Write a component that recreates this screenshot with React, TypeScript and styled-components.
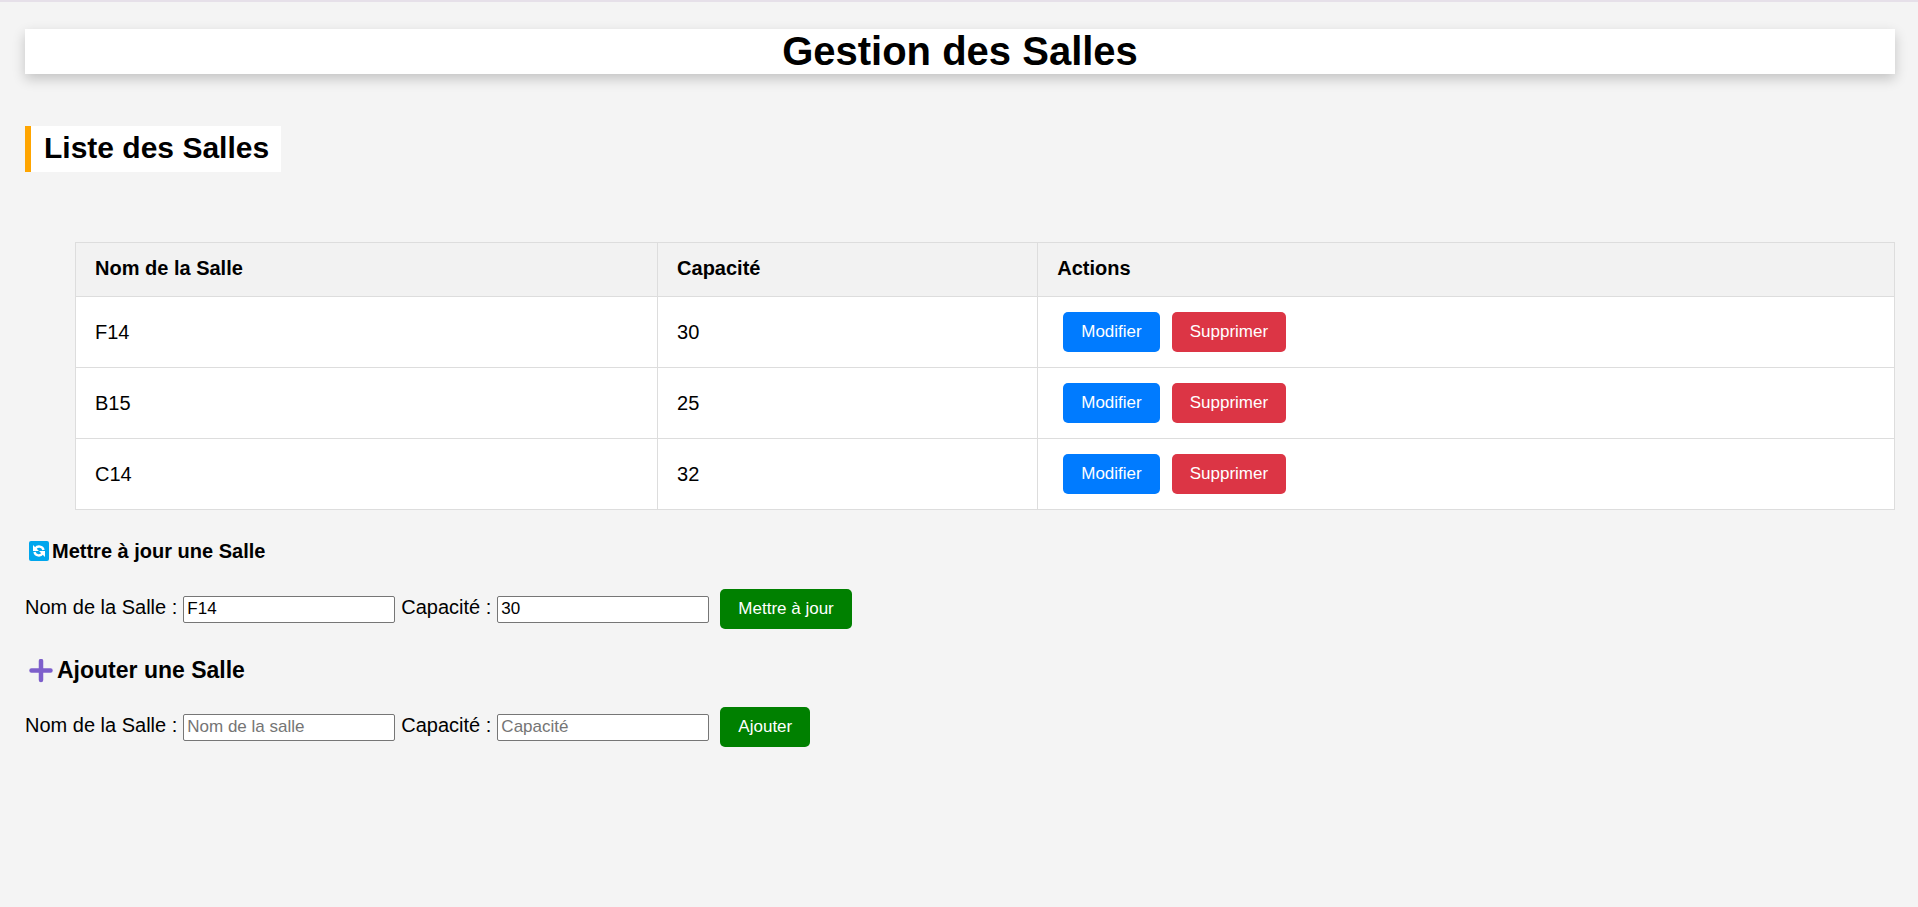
import React, { useState } from "react";
import styled, { createGlobalStyle } from "styled-components";

const GlobalStyle = createGlobalStyle`
  body {
    margin: 0;
    background: #f4f4f4;
    color: #000;
    font-family: Arial, "Liberation Sans", sans-serif;
    font-size: 20px;
    line-height: 23px;
  }
`;

const Page = styled.main`
  border-top: 2px solid #e6e0e9;
  padding: 27px 23px 25px 25px;
`;

const PageTitle = styled.h1`
  margin: 0 0 52px;
  background: #fff;
  box-shadow: 0 5px 12px rgba(0, 0, 0, 0.2);
  font-size: 40px;
  line-height: 45px;
  text-align: center;
`;

const ListTitle = styled.h2`
  width: fit-content;
  margin: 0 0 70px;
  padding: 5px 12px 7px 13px;
  border-left: 6px solid orange;
  background: #fff;
  font-size: 30px;
  line-height: 34px;
`;

const TableArea = styled.div`
  padding-left: 50px;
`;

const RoomTable = styled.table`
  width: 100%;
  border-collapse: collapse;
  background: #fff;
`;

const HeadCell = styled.th<{ $width?: string }>`
  width: ${(p) => p.$width ?? "auto"};
  padding: 14px 19px 16px;
  border: 1px solid #ddd;
  background: #f2f2f2;
  text-align: left;
`;

const Cell = styled.td`
  padding: 15px 19px;
  border: 1px solid #ddd;
`;

const ActionGroup = styled.div`
  display: flex;
  gap: 12px;
  padding-left: 6px;
`;

const tones = { edit: "#007bff", remove: "#dc3545", submit: "green" };

const Button = styled.button<{ $tone: keyof typeof tones }>`
  height: 40px;
  padding: 0 18px;
  border: 0;
  border-radius: 5px;
  background: ${(p) => tones[p.$tone]};
  color: #fff;
  font-family: inherit;
  font-size: 17px;
  cursor: pointer;
`;

const SectionTitle = styled.h3<{ $large?: boolean }>`
  display: flex;
  align-items: center;
  gap: 3px;
  margin: ${(p) => (p.$large ? "28px 0 23px" : "29px 0 26px")};
  padding-left: 4px;
  font-size: ${(p) => (p.$large ? 23 : 20)}px;
  line-height: ${(p) => (p.$large ? 27 : 24)}px;
`;

const RoomForm = styled.form`
  display: flex;
  align-items: baseline;
  gap: 11px;
`;

const Fields = styled.div`
  display: flex;
  align-items: baseline;
  gap: 6px;
`;

const TextInput = styled.input`
  box-sizing: border-box;
  width: 212px;
  height: 27px;
  padding: 1px 3px;
  border: 1px solid #767676;
  border-radius: 2px;
  background: #fff;
  color: #000;
  font-family: inherit;
  font-size: 17px;

  &::placeholder {
    color: #757575;
  }
`;

const RefreshIcon = () => (
  <svg width="20" height="20" viewBox="0 0 20 20" aria-hidden="true">
    <rect width="20" height="20" rx="2" fill="#00a6ed" />
    <path d="M6.500 7.500C8.500 4.500 13.500 5 14.500 9M13.500 12.500c-2 3-7 2.500-8-1.500" fill="none" stroke="#fff" strokeWidth="2.400" />
    <path d="M4 4v6h6zM16 16v-6h-6z" fill="#fff" />
  </svg>
);

const PlusIcon = () => (
  <svg width="25" height="24" viewBox="0 0 25 24" aria-hidden="true">
    <path d="M2.500 11.500h19M12 2v19" stroke="#7d5fcb" strokeWidth="4.500" strokeLinecap="round" />
  </svg>
);

const rooms = [
  { name: "F14", capacity: 30 },
  { name: "B15", capacity: 25 },
  { name: "C14", capacity: 32 },
];

type RoomEditorProps = {
  id: string;
  name?: string;
  capacity?: string;
  submit: string;
};

function RoomEditor({ id, name = "", capacity = "", submit }: RoomEditorProps) {
  const [roomName, setRoomName] = useState(name);
  const [roomCapacity, setRoomCapacity] = useState(capacity);
  return (
    <RoomForm onSubmit={(e) => e.preventDefault()}>
      <Fields>
        <label htmlFor={`${id}-name`}>Nom de la Salle :</label>
        <TextInput
          id={`${id}-name`}
          placeholder="Nom de la salle"
          value={roomName}
          onChange={(e) => setRoomName(e.target.value)}
        />
        <label htmlFor={`${id}-capacity`}>Capacité :</label>
        <TextInput
          id={`${id}-capacity`}
          placeholder="Capacité"
          inputMode="numeric"
          value={roomCapacity}
          onChange={(e) => setRoomCapacity(e.target.value)}
        />
      </Fields>
      <Button type="submit" $tone="submit">{submit}</Button>
    </RoomForm>
  );
}

export default function App() {
  return (
    <>
      <GlobalStyle />
      <Page>
        <PageTitle>Gestion des Salles</PageTitle>
        <ListTitle>Liste des Salles</ListTitle>
        <TableArea>
          <RoomTable>
            <thead>
              <tr>
                <HeadCell $width="32%">Nom de la Salle</HeadCell>
                <HeadCell $width="20.9%">Capacité</HeadCell>
                <HeadCell>Actions</HeadCell>
              </tr>
            </thead>
            <tbody>
              {rooms.map((room) => (
                <tr key={room.name}>
                  <Cell>{room.name}</Cell>
                  <Cell>{room.capacity}</Cell>
                  <Cell>
                    <ActionGroup>
                      <Button type="button" $tone="edit">Modifier</Button>
                      <Button type="button" $tone="remove">Supprimer</Button>
                    </ActionGroup>
                  </Cell>
                </tr>
              ))}
            </tbody>
          </RoomTable>
        </TableArea>
        <SectionTitle><RefreshIcon />Mettre à jour une Salle</SectionTitle>
        <RoomEditor id="update" name="F14" capacity="30" submit="Mettre à jour" />
        <SectionTitle $large><PlusIcon />Ajouter une Salle</SectionTitle>
        <RoomEditor id="add" submit="Ajouter" />
      </Page>
    </>
  );
}
